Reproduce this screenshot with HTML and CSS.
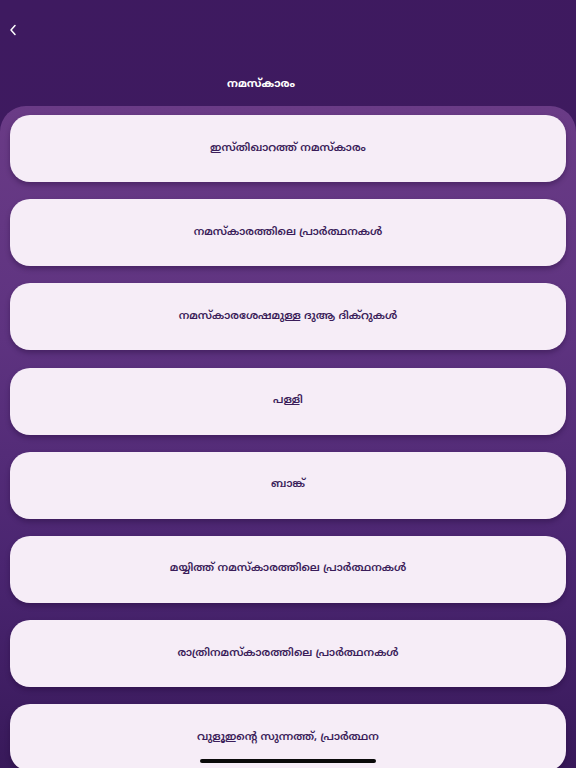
FILE: index.html
```html
<!DOCTYPE html>
<html lang="ml">
<head>
<meta charset="utf-8">
<link rel="stylesheet" href="styles.css">
</head>
<body>
<div class="screen">
  <header class="topbar">
    <button class="back" aria-label="Back">
      <svg width="10" height="14" viewBox="0 0 10 14"><path d="M7 2.5 L3 7 L7 11.5" fill="none" stroke="#fff" stroke-width="1.5" stroke-linecap="round" stroke-linejoin="round"/></svg>
    </button>
  </header>
  <h1 class="title">നമസ്കാരം</h1>
  <main class="panel">
    <a class="card">ഇസ്തിഖാറത്ത് നമസ്കാരം</a>
    <a class="card">നമസ്കാരത്തിലെ പ്രാർത്ഥനകൾ</a>
    <a class="card">നമസ്കാരശേഷമുള്ള ദുആ ദിക്റുകൾ</a>
    <a class="card">പള്ളി</a>
    <a class="card">ബാങ്ക്</a>
    <a class="card">മയ്യിത്ത് നമസ്കാരത്തിലെ പ്രാർത്ഥനകൾ</a>
    <a class="card">രാത്രിനമസ്കാരത്തിലെ പ്രാർത്ഥനകൾ</a>
    <a class="card">വുളൂഇന്റെ സുന്നത്ത്, പ്രാർത്ഥന</a>
  </main>
  <div class="home-indicator"></div>
</div>
</body>
</html>
```
FILE: styles.css
```css
* { box-sizing: border-box; }
html, body { margin: 0; padding: 0; }
body {
  width: 576px;
  height: 768px;
  overflow: hidden;
  font-family: "Noto Sans Malayalam", "Noto Sans", "DejaVu Sans", sans-serif;
  background: #3f1a5f;
}
.screen {
  position: relative;
  width: 576px;
  height: 768px;
  overflow: hidden;
  background: linear-gradient(160deg, #3e1a60 0%, #3f1a5e 80%, #2f1550 100%);
  display: flex;
  flex-direction: column;
}
.topbar {
  flex: 0 0 60px;
  height: 60px;
  display: flex;
  align-items: center;
  padding-left: 6px;
}
.back {
  background: none;
  border: 0;
  padding: 0;
  width: 14px;
  height: 16px;
  display: flex;
  align-items: center;
  justify-content: center;
}
.title {
  flex: 0 0 46px;
  margin: 0;
  height: 46px;
  display: flex;
  align-items: center;
  justify-content: center;
  color: #fff;
  font-size: 11px;
  font-weight: 700;
  padding: 2px 54px 0 0;
}
.panel {
  flex: 1 1 auto;
  min-height: 0;
  overflow: hidden;
  border-radius: 26px 26px 0 0;
  background: linear-gradient(180deg, #6a3b86 0%, #5e3380 35%, #4a2570 70%, #38195a 100%);
  padding: 9px 10px 0;
  display: flex;
  flex-direction: column;
  gap: 17.2px;
}
.card {
  flex: 0 0 67px;
  height: 67px;
  border-radius: 20px;
  background: #f6edf7;
  box-shadow: 0 3px 5px rgba(30, 5, 50, 0.35);
  display: flex;
  align-items: center;
  justify-content: center;
  color: #3b1d5a;
  font-size: 11px;
  font-weight: 600;
  text-decoration: none;
  padding-bottom: 2px;
}
.home-indicator {
  position: absolute;
  left: 200px;
  bottom: 5px;
  width: 176px;
  height: 4px;
  border-radius: 2px;
  background: #0a0a0a;
}
```
